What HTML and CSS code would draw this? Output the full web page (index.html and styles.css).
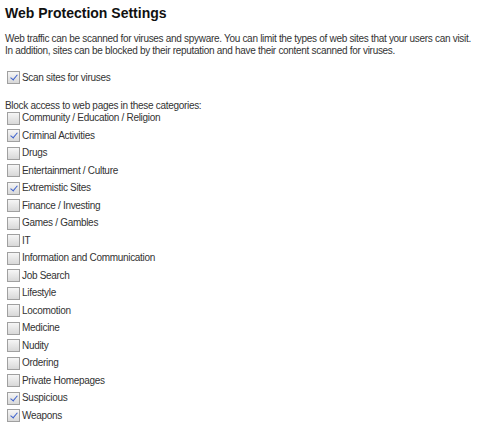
FILE: index.html
```html
<!DOCTYPE html>
<html>
<head>
<meta charset="utf-8">
<link rel="stylesheet" href="styles.css">
</head>
<body>
<div class="page">
  <h1 class="title">Web Protection Settings</h1>
  <p class="intro">Web traffic can be scanned for viruses and spyware. You can limit the types of web sites that your users can visit.<br>In addition, sites can be blocked by their reputation and have their content scanned for viruses.</p>
  <div class="scan">
    <label class="row"><span class="cb checked"></span><span class="lbl">Scan sites for viruses</span></label>
  </div>
  <div class="block-title">Block access to web pages in these categories:</div>
  <div class="list">
    <label class="row"><span class="cb"></span><span class="lbl">Community / Education / Religion</span></label>
    <label class="row"><span class="cb checked"></span><span class="lbl">Criminal Activities</span></label>
    <label class="row"><span class="cb"></span><span class="lbl">Drugs</span></label>
    <label class="row"><span class="cb"></span><span class="lbl">Entertainment / Culture</span></label>
    <label class="row"><span class="cb checked"></span><span class="lbl">Extremistic Sites</span></label>
    <label class="row"><span class="cb"></span><span class="lbl">Finance / Investing</span></label>
    <label class="row"><span class="cb"></span><span class="lbl">Games / Gambles</span></label>
    <label class="row"><span class="cb"></span><span class="lbl">IT</span></label>
    <label class="row"><span class="cb"></span><span class="lbl">Information and Communication</span></label>
    <label class="row"><span class="cb"></span><span class="lbl">Job Search</span></label>
    <label class="row"><span class="cb"></span><span class="lbl">Lifestyle</span></label>
    <label class="row"><span class="cb"></span><span class="lbl">Locomotion</span></label>
    <label class="row"><span class="cb"></span><span class="lbl">Medicine</span></label>
    <label class="row"><span class="cb"></span><span class="lbl">Nudity</span></label>
    <label class="row"><span class="cb"></span><span class="lbl">Ordering</span></label>
    <label class="row"><span class="cb"></span><span class="lbl">Private Homepages</span></label>
    <label class="row"><span class="cb checked"></span><span class="lbl">Suspicious</span></label>
    <label class="row"><span class="cb checked"></span><span class="lbl">Weapons</span></label>
  </div>
</div>
</body>
</html>
```
FILE: styles.css
```css
html, body {
  margin: 0;
  padding: 0;
  background: #fff;
}
.page {
  font-family: "Liberation Sans", Arial, sans-serif;
  font-size: 10px;
  letter-spacing: -0.3px;
  color: #333;
  padding: 5px 5px 0 5px;
}
.title {
  margin: 0;
  font-size: 14px;
  font-weight: bold;
  letter-spacing: 0;
  color: #111;
  line-height: 17px;
}
.intro {
  margin: 11px 0 0 0;
  line-height: 12px;
  white-space: nowrap;
}
.scan {
  margin-top: 12px;
}
.block-title {
  margin-top: 13px;
  line-height: 12px;
}
.list {
  margin-top: -2px;
}
.row {
  display: flex;
  align-items: center;
  height: 17.5px;
  gap: 2px;
  padding-left: 2px;
}
.cb {
  width: 11px;
  height: 11px;
  border: 1px solid #a0a0a0;
  background: linear-gradient(#f6f6f6, #d8d8d8);
  box-sizing: content-box;
  position: relative;
  flex: none;
}
.cb.checked::after {
  content: "";
  position: absolute;
  left: 3.5px;
  top: 1px;
  width: 3px;
  height: 6px;
  border-right: 1.6px solid #3a5fcd;
  border-bottom: 1.6px solid #3a5fcd;
  transform: rotate(40deg);
}
.lbl {
  line-height: 12px;
}
```
